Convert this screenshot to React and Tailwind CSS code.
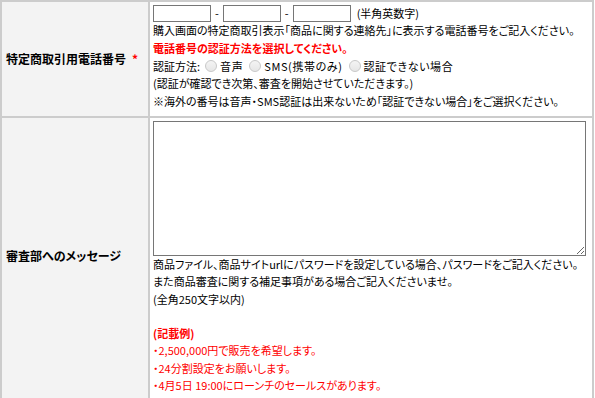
import React from 'react'

const font = { fontFamily: '"Noto Sans CJK JP", "Noto Sans", sans-serif', fontFeatureSettings: '"palt"' }

function Radio({ label }) {
  return (
    <span className="inline-flex items-center mr-[6px]">
      <span className="inline-block w-[12px] h-[12px] rounded-full border border-[#c8c8c8] bg-gradient-to-b from-[#f4f4f4] to-[#e6e6e6] mr-[3px]" />
      <span className="tracking-[0.6px]">{label}</span>
    </span>
  )
}

function PhoneInput() {
  return <input type="text" className="w-[58px] h-[17px] border border-[#767676] bg-white outline-none" />
}

export default function App() {
  return (
    <div className="bg-white w-[595px] h-[398px] overflow-hidden text-[11px] text-black whitespace-nowrap" style={font}>
      <div className="w-[594px] border border-[#cccccc] grid grid-cols-[148px_444px]">
        {/* row 1 */}
        <div className="border border-[#cccccc] bg-[#f3f3f3] flex items-center pl-[4px] h-[116px] text-[12px]">
          <span className="font-bold">特定商取引用電話番号</span>
          <span className="text-[#ff0000] font-bold ml-[6px]">*</span>
        </div>
        <div className="border border-[#cccccc] pt-[3px] pl-[3px] leading-[17.75px] h-[116px]">
          <div className="flex items-center h-[17px]">
            <PhoneInput />
            <span className="mx-[4px]">-</span>
            <PhoneInput />
            <span className="mx-[4px]">-</span>
            <PhoneInput />
            <span className="ml-[6px]">(半角英数字)</span>
          </div>
          <p>購入画面の特定商取引表示「商品に関する連絡先」に表示する電話番号をご記入ください。</p>
          <p className="text-[#ff0000] font-bold">電話番号の認証方法を選択してください。</p>
          <div className="flex items-center">
            <span className="mr-[5px]">認証方法:</span>
            <Radio label="音声" />
            <Radio label="SMS(携帯のみ)" />
            <Radio label="認証できない場合" />
          </div>
          <p>(認証が確認でき次第、審査を開始させていただきます。)</p>
          <p>※海外の番号は音声・SMS認証は出来ないため「認証できない場合」をご選択ください。</p>
        </div>

        {/* row 2 */}
        <div className="border border-[#cccccc] bg-[#f3f3f3] flex items-center pl-[4px] pb-[6px] h-[284px] text-[12px]">
          <span className="font-bold">審査部へのメッセージ</span>
        </div>
        <div className="border border-[#cccccc] pt-[3px] pl-[3px] leading-[17.3px] h-[284px]">
          <textarea className="block w-[433px] h-[135px] border border-[#767676] bg-white outline-none resize" />
          <p>商品ファイル、商品サイトurlにパスワードを設定している場合、パスワードをご記入ください。</p>
          <p>また商品審査に関する補足事項がある場合ご記入くださいませ。</p>
          <p>(全角250文字以内)</p>
          <p>&nbsp;</p>
          <p className="text-[#ff0000] font-bold">(記載例)</p>
          <p className="text-[#ff0000]">・2,500,000円で販売を希望します。</p>
          <p className="text-[#ff0000]">・24分割設定をお願いします。</p>
          <p className="text-[#ff0000]">・4月5日 19:00にローンチのセールスがあります。</p>
        </div>
      </div>
    </div>
  )
}
